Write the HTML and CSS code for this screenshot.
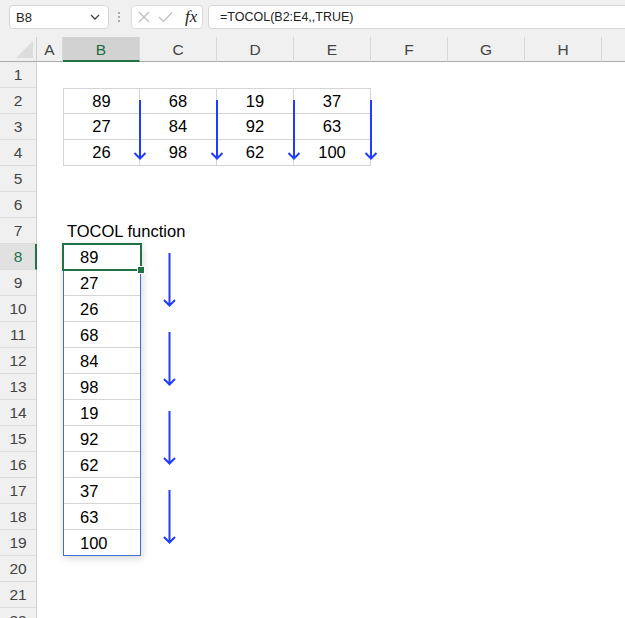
FILE: index.html
```html
<!DOCTYPE html>
<html>
<head>
<meta charset="utf-8">
<link rel="stylesheet" href="styles.css">
</head>
<body>
<div class="app">
  <div class="fbar">
    <div class="namebox">
      <span class="nametext">B8</span>
      <svg class="chev" width="10" height="6" viewBox="0 0 10 6"><path d="M1 1 L5 5 L9 1" fill="none" stroke="#444" stroke-width="1.3"/></svg>
    </div>
    <svg class="grip" width="4" height="12" viewBox="0 0 4 12"><circle cx="2" cy="2" r="1.1" fill="#999"/><circle cx="2" cy="6" r="1.1" fill="#999"/><circle cx="2" cy="10" r="1.1" fill="#999"/></svg>
    <div class="fxbox">
      <svg width="12" height="12" viewBox="0 0 12 12"><path d="M1 1 L11 11 M11 1 L1 11" stroke="#bcbcbc" stroke-width="1.2" fill="none"/></svg>
      <svg width="15" height="12" viewBox="0 0 15 12"><path d="M1 6 L5.5 10.5 L14 1.5" stroke="#bcbcbc" stroke-width="1.2" fill="none"/></svg>
      <span class="fx">fx</span>
    </div>
    <div class="formula">=TOCOL(B2:E4,,TRUE)</div>
  </div>

  <div class="sheet">
    <div class="row hdr">
      <div class="corner"><svg width="17" height="17" viewBox="0 0 17 17"><path d="M17 0 L17 17 L0 17 Z" fill="#dcdcdc"/></svg></div>
      <div class="ch">A</div>
      <div class="ch sel">B</div>
      <div class="ch">C</div>
      <div class="ch">D</div>
      <div class="ch">E</div>
      <div class="ch">F</div>
      <div class="ch">G</div>
      <div class="ch">H</div>
      <div class="ch last"></div>
    </div>

    <div class="row"><div class="rh">1</div></div>
    <div class="row"><div class="rh">2</div><div></div><div class="t top left">89</div><div class="t top">68</div><div class="t top">19</div><div class="t top">37</div></div>
    <div class="row"><div class="rh">3</div><div></div><div class="t left">27</div><div class="t">84</div><div class="t">92</div><div class="t">63</div></div>
    <div class="row"><div class="rh">4</div><div></div><div class="t left">26</div><div class="t">98</div><div class="t">62</div><div class="t">100</div></div>
    <div class="row"><div class="rh">5</div></div>
    <div class="row"><div class="rh">6</div></div>
    <div class="row"><div class="rh">7</div><div></div><div class="label">TOCOL function</div></div>
    <div class="row"><div class="rh on">8</div><div></div><div class="sp">89</div></div>
    <div class="row"><div class="rh">9</div><div></div><div class="sp">27</div></div>
    <div class="row"><div class="rh">10</div><div></div><div class="sp">26</div></div>
    <div class="row"><div class="rh">11</div><div></div><div class="sp">68</div></div>
    <div class="row"><div class="rh">12</div><div></div><div class="sp">84</div></div>
    <div class="row"><div class="rh">13</div><div></div><div class="sp">98</div></div>
    <div class="row"><div class="rh">14</div><div></div><div class="sp">19</div></div>
    <div class="row"><div class="rh">15</div><div></div><div class="sp">92</div></div>
    <div class="row"><div class="rh">16</div><div></div><div class="sp">62</div></div>
    <div class="row"><div class="rh">17</div><div></div><div class="sp">37</div></div>
    <div class="row"><div class="rh">18</div><div></div><div class="sp">63</div></div>
    <div class="row"><div class="rh">19</div><div></div><div class="sp">100</div></div>
    <div class="row"><div class="rh">20</div></div>
    <div class="row"><div class="rh">21</div></div>
    <div class="row"><div class="rh">22</div></div>

    <div class="spill"></div>
    <div class="selbox"><div class="handle"></div></div>

    <svg class="arrows" width="625" height="581" viewBox="0 0 625 581">
      <g fill="none" stroke="#1f3cff" stroke-width="2">
        <path d="M140 63 V121.5 M134.5 116 L140 121.5 L145.5 116"/>
        <path d="M217 63 V121.5 M211.5 116 L217 121.5 L222.5 116"/>
        <path d="M294 63 V121.5 M288.5 116 L294 121.5 L299.5 116"/>
        <path d="M371 63 V121.5 M365.5 116 L371 121.5 L376.5 116"/>
        <path d="M169.5 216 V268.5 M164 263 L169.5 268.5 L175 263"/>
        <path d="M169.5 295 V347.5 M164 342 L169.5 347.5 L175 342"/>
        <path d="M169.5 374 V426.5 M164 421 L169.5 426.5 L175 421"/>
        <path d="M169.5 453 V505.5 M164 500 L169.5 505.5 L175 500"/>
      </g>
    </svg>
  </div>
</div>
</body>
</html>
```

FILE: styles.css
```css
html, body {
  margin: 0;
  padding: 0;
  overflow: hidden;
  background: #ffffff;
}

.app {
  width: 625px;
  height: 618px;
  overflow: hidden;
  font-family: "Liberation Sans", Arial, sans-serif;
}

.fbar {
  height: 37px;
  background: #f0f0f0;
  display: flex;
  align-items: flex-start;
  padding-top: 5px;
  box-sizing: border-box;
}

.fbar > * {
  flex-shrink: 0;
}

.namebox {
  margin-left: 9px;
  width: 100px;
  height: 24px;
  box-sizing: border-box;
  background: #fff;
  border: 1px solid #d6d6d6;
  border-radius: 4px;
  display: flex;
  align-items: center;
  justify-content: space-between;
  padding: 0 8px 0 6px;
}

.nametext {
  font-size: 13px;
  color: #222;
}

.grip {
  margin: 6px 0 0 8px;
}

.fxbox {
  margin-left: 10px;
  width: 72px;
  height: 24px;
  box-sizing: border-box;
  background: #fff;
  border: 1px solid #dcdcdc;
  border-radius: 4px;
  display: flex;
  align-items: center;
  padding-left: 6px;
  gap: 8px;
}

.fx {
  font-family: "Liberation Serif", "Times New Roman", serif;
  font-style: italic;
  font-size: 17px;
  color: #222;
  margin-left: 4px;
}

.formula {
  margin-left: 5px;
  width: 430px;
  height: 24px;
  box-sizing: border-box;
  background: #fff;
  border: 1px solid #d6d6d6;
  border-radius: 4px;
  font-size: 12.5px;
  color: #222;
  padding-left: 11px;
  line-height: 22px;
}

.sheet {
  position: relative;
  height: 581px;
  overflow: hidden;
}

.row {
  display: grid;
  grid-template-columns: 37px 26px repeat(7, 77px) 1fr;
  height: 26px;
}

.row > div {
  box-sizing: border-box;
  height: 26px;
}

.hdr {
  height: 25px;
  background: #f0f0f0;
}

.hdr > div {
  height: 25px;
  border-bottom: 1px solid #ababab;
}

.corner {
  border-right: 1px solid #d0d0d0;
  display: flex;
  align-items: flex-end;
  justify-content: flex-end;
  padding: 0 3px 3px 0;
}

.ch {
  border-right: 1px solid #d8d8d8;
  font-size: 15.5px;
  color: #444;
  text-align: center;
  line-height: 25px;
}

.ch.sel {
  background: #d2d2d2;
  color: #1d6b40;
  border-bottom: 2px solid #217346;
}

.ch.last {
  border-right: none;
}

.rh {
  grid-column: 1;
  background: #f0f0f0;
  border-right: 1px solid #d0d0d0;
  border-bottom: 1px solid #dcdcdc;
  font-size: 15.5px;
  color: #444;
  text-align: center;
  line-height: 26px;
}

.rh.on {
  background: #e1e1e1;
  color: #217346;
  border-right: 2px solid #217346;
  padding-left: 1px;
}

.t {
  border-right: 1px solid #d4d4d4;
  border-bottom: 1px solid #d4d4d4;
  font-size: 16.5px;
  color: #000;
  text-align: center;
  line-height: 25px;
}

.t.top {
  border-top: 1px solid #d4d4d4;
  line-height: 24px;
}

.t.left {
  border-left: 1px solid #d4d4d4;
}

.label {
  font-size: 16.5px;
  color: #000;
  white-space: nowrap;
  padding-left: 4px;
  line-height: 26px;
}

.sp {
  border-bottom: 1px solid #d4d4d4;
  font-size: 16.5px;
  color: #000;
  padding-left: 17px;
  line-height: 26px;
}

.spill {
  position: absolute;
  left: 63px;
  top: 207px;
  width: 78px;
  height: 312px;
  box-sizing: border-box;
  border: 1px solid #3d6fd4;
  box-shadow: 1px 2px 8px rgba(0, 0, 0, 0.18);
}

.selbox {
  position: absolute;
  left: 62px;
  top: 206px;
  width: 80px;
  height: 28px;
  box-sizing: border-box;
  border: 2px solid #217346;
}

.handle {
  position: absolute;
  right: -5px;
  bottom: -5px;
  width: 6px;
  height: 6px;
  background: #217346;
  border: 1px solid #fff;
}

.arrows {
  position: absolute;
  left: 0;
  top: 0;
  pointer-events: none;
}
```
